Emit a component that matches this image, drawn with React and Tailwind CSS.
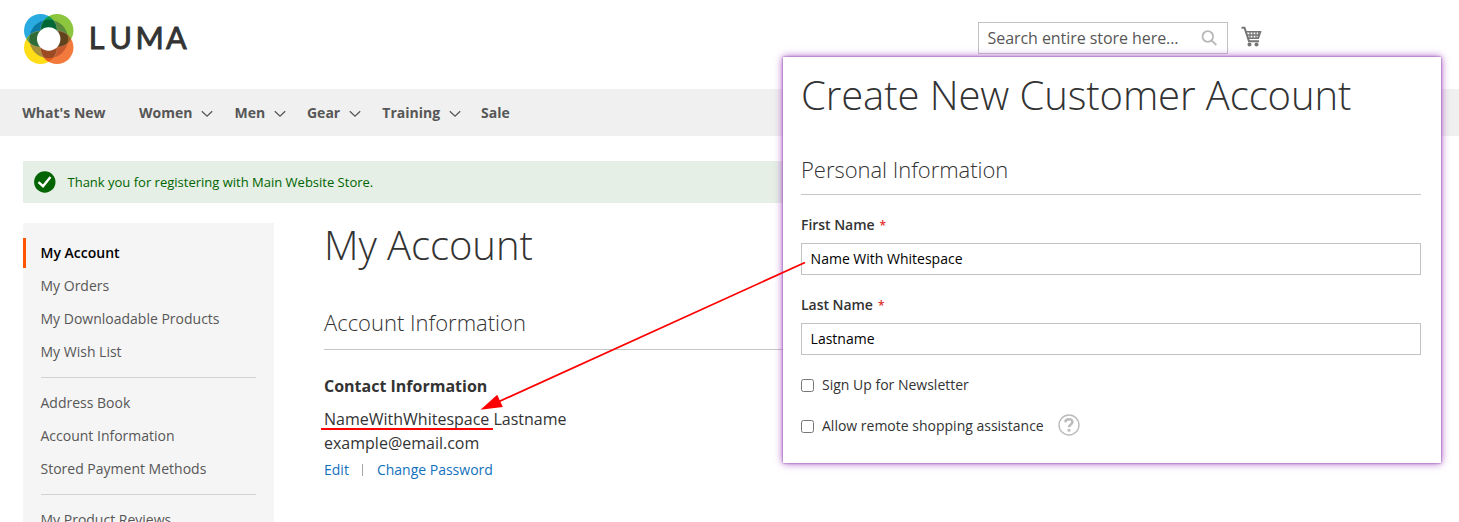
function Chevron() {
  return (
    <svg className="ml-[8.5px] mt-[2px] h-[8px] w-[12px]" viewBox="0 0 12 8" fill="none" stroke="#575757" strokeWidth="1.3">
      <path d="M0.8 1.2 L6 6.2 L11.2 1.2" />
    </svg>
  );
}

function Logo() {
  return (
    <svg className="h-[60px] w-[180px]" viewBox="20 10 180 60">
      <defs>
        <clipPath id="blue"><circle cx="40.5" cy="30.5" r="16.5" /></clipPath>
        <clipPath id="orange"><circle cx="57" cy="47.5" r="16.5" /></clipPath>
        <clipPath id="core"><circle cx="48.7" cy="39" r="19.3" /></clipPath>
      </defs>
      <circle cx="40.5" cy="30.5" r="16.5" fill="#29abe2" />
      <circle cx="57" cy="30.5" r="16.5" fill="#8cc63f" />
      <circle cx="40.5" cy="47.5" r="16.5" fill="#ffde17" />
      <circle cx="57" cy="47.5" r="16.5" fill="#f37a3d" />
      <g clipPath="url(#blue)"><circle cx="57" cy="30.5" r="16.5" fill="#069a50" /></g>
      <g clipPath="url(#blue)"><circle cx="40.5" cy="47.5" r="16.5" fill="#5fa046" /></g>
      <g clipPath="url(#orange)"><circle cx="57" cy="30.5" r="16.5" fill="#9a6a2a" /></g>
      <g clipPath="url(#orange)"><circle cx="40.5" cy="47.5" r="16.5" fill="#e8601c" /></g>
      <g clipPath="url(#core)">
        <circle cx="40.5" cy="30.5" r="16.5" fill="#0b7ba5" />
        <circle cx="57" cy="30.5" r="16.5" fill="#5b8a3d" />
        <circle cx="40.5" cy="47.5" r="16.5" fill="#a89038" />
        <circle cx="57" cy="47.5" r="16.5" fill="#c65a2d" />
        <g clipPath="url(#blue)"><circle cx="57" cy="30.5" r="16.5" fill="#006837" /></g>
        <g clipPath="url(#blue)"><circle cx="40.5" cy="47.5" r="16.5" fill="#2f6b37" /></g>
        <g clipPath="url(#orange)"><circle cx="57" cy="30.5" r="16.5" fill="#60421c" /></g>
        <g clipPath="url(#orange)"><circle cx="40.5" cy="47.5" r="16.5" fill="#9c4a24" /></g>
        <g fill="none" stroke="#fff" strokeOpacity="0.3" strokeWidth="0.5">
          <circle cx="40.5" cy="30.5" r="16.5" />
          <circle cx="57" cy="30.5" r="16.5" />
          <circle cx="40.5" cy="47.5" r="16.5" />
          <circle cx="57" cy="47.5" r="16.5" />
        </g>
      </g>
      <circle cx="48.7" cy="39" r="11.7" fill="#fff" />
      <text x="88.7 109.5 135.5 166" y="49.3" className="font-['Lato',sans-serif] text-[30.5px] font-normal" fill="#333" stroke="#333" strokeWidth="0.9">LUMA</text>
    </svg>
  );
}

function Cart() {
  return (
    <svg className="ml-[13px] h-[22px] w-[22px]" viewBox="0 0 22 22" fill="none" stroke="#757575">
      <path d="M0.5 1.8 H3.5 L8 15.3 H18" strokeWidth="2" />
      <path d="M5 5.8 H19.5 L17.3 12.3 H7" strokeWidth="1.6" />
      <path d="M6 9 H19 M9 5.5 V12 M12 5.5 V12 M15 5.5 V12 M18 5.5 L17 12" strokeWidth="1.3" />
      <circle cx="8.5" cy="18.5" r="2" fill="#757575" stroke="none" />
      <circle cx="15.5" cy="18.5" r="2" fill="#757575" stroke="none" />
    </svg>
  );
}

const nav = [
  ["What's New", false, "w-[116.7px]"],
  ["Women", true, "w-[95.5px]"],
  ["Men", true, "w-[72.5px]"],
  ["Gear", true, "w-[75.3px]"],
  ["Training", true, "w-[98.8px]"],
  ["Sale", false, "w-[60px]"],
];

function SideItem({ children }) {
  return <li className="h-[33px] pl-[17.5px] leading-[33px]">{children}</li>;
}

function Field({ label, value }) {
  return (
    <div className="mb-5">
      <div className="h-[28px] font-semibold leading-5 tracking-[-0.04px]">
        {label}<span className="ml-[5px] text-[12px] text-[#e02b27]">*</span>
      </div>
      <div className="h-8 border border-[#c2c2c2] px-[8.6px] leading-[30px] text-black">{value}</div>
    </div>
  );
}

function Dialog() {
  return (
    <section className="absolute left-[783px] top-[57px] h-[406px] w-[658px] bg-white pl-[18px] pr-5 shadow-[0_0_2px_#8e44ad,0_0_8px_#a24bc0]">
      <h1 className="h-[102px] pt-[16px] text-[40px] font-light leading-[44px] tracking-[-0.09px]">Create New Customer Account</h1>
      <h2 className="mb-[20px] h-[36px] border-b border-[#c6c6c6] text-[22px] font-light leading-[20px] tracking-[-0.03px]">Personal Information</h2>
      <Field label="First Name" value="Name With Whitespace" />
      <Field label="Last Name" value="Lastname" />
      <label className="flex h-5 items-start"><input type="checkbox" className="mr-2 mt-[4px] h-[13px] w-[13px]" /><span className="leading-5">Sign Up for Newsletter</span></label>
      <div className="mt-[20px] flex h-[22px] items-start">
        <label className="flex items-start"><input type="checkbox" className="mr-2 mt-[5px] h-[13px] w-[13px]" /><span className="mt-px leading-5">Allow remote shopping assistance</span></label>
        <svg className="-mt-px ml-[14.5px] h-[22px] w-[22px]" viewBox="0 0 22 22" fill="none" stroke="#bbb">
          <circle cx="11" cy="11" r="10" strokeWidth="1.4" />
          <path d="M7.3 8.3 C7.5 4.1 14.5 4.2 14.4 8 C14.4 10.6 11 10.3 11 13.3" strokeWidth="2.5" />
          <path d="M11 15 V17.6" strokeWidth="2.8" />
        </svg>
      </div>
    </section>
  );
}

export default function App() {
  return (
    <div className="relative h-[522px] w-[1459px] overflow-hidden bg-white font-['Open_Sans',sans-serif] text-[14px] text-[#333]">
      <header className="flex h-[89px] items-start pl-[20px] pt-[10px]">
        <Logo />
        <div className="ml-[778px] mt-[12px] flex h-8 w-[250px] items-center border border-[#c2c2c2] pl-[8.5px] pr-[10px] text-[16px] tracking-[-0.06px] text-[#575757]">
          <span className="grow">Search entire store here...</span>
          <svg className="h-4 w-4" viewBox="0 0 16 16" fill="none" stroke="#b8b8b8" strokeWidth="1.8"><circle cx="6.8" cy="6.5" r="5.3" /><path d="M10.5 10.3 L15.3 15" /></svg>
        </div>
        <div className="mt-[16px]"><Cart /></div>
      </header>
      <nav className="flex h-[47px] items-center bg-[#f0f0f0] pl-[22.3px] font-bold text-[#575757]">
        {nav.map(([name, arrow, width]) => (
          <div key={name} className={"flex shrink-0 items-center " + width}>{name}{arrow && <Chevron />}</div>
        ))}
      </nav>
      <div className="ml-[23px] mt-[25px] flex h-[42px] w-[1413px] items-center bg-[#e5efe5] pl-[11px] text-[13px] text-[#006400]">
        <svg className="mr-[11.5px] h-[22px] w-[22px]" viewBox="0 0 22 22"><circle cx="10.8" cy="11" r="10.7" fill="#006400" /><path d="M4.5 11.2 L9 15.2 L16.5 6" fill="none" stroke="#fff" strokeWidth="2.4" /></svg>
        <span className="pt-[2px]">Thank you for registering with Main Website Store.</span>
      </div>
      <div className="flex pl-[23px] pt-5">
        <ul className="h-[320px] w-[251px] bg-[#f5f5f5] pt-[15px] text-[#575757]">
          <li className="mb-[1px] h-[30px] border-l-[3px] border-[#ff5501] pl-[14.5px] font-semibold leading-[30px] text-black">My Account</li>
          <SideItem>My Orders</SideItem>
          <SideItem>My Downloadable Products</SideItem>
          <SideItem>My Wish List</SideItem>
          <li className="mx-[18px] mb-[8px] mt-[9px] h-px bg-[#d1d1d1]" />
          <SideItem>Address Book</SideItem>
          <SideItem>Account Information</SideItem>
          <SideItem>Stored Payment Methods</SideItem>
          <li className="mx-[18px] mb-[8px] mt-[9px] h-px bg-[#d1d1d1]" />
          <SideItem>My Product Reviews</SideItem>
        </ul>
        <main className="ml-[50px] w-[1112px]">
          <h1 className="h-[87px] text-[40px] font-light leading-[44px] tracking-[-0.06px]">My Account</h1>
          <h2 className="h-[40px] border-b border-[#c6c6c6] text-[22px] font-light leading-[24px]">Account Information</h2>
          <h3 className="mt-[24px] text-[16px] font-bold leading-[24px]">Contact Information</h3>
          <p className="mt-[9px] text-[16px] leading-[24px]">NameWithWhitespace Lastname<br />example@email.com</p>
          <div className="mt-[5px] flex items-center leading-5 text-[#1271bd]">
            Edit<span className="ml-[13px] mr-[14px] h-[12px] w-px bg-[#a6a6a6]" />Change Password
          </div>
        </main>
      </div>
      <Dialog />
      <svg className="absolute left-[320px] top-[255px] h-[180px] w-[490px]" viewBox="320 255 490 180">
        <path d="M805 262.5 L498 402" stroke="#f00" strokeWidth="1.8" />
        <path d="M480.5 409.8 L497.2 394.8 L502.8 407 Z" fill="#f00" />
        <path d="M321 429 H493" stroke="#f00" strokeWidth="2" />
      </svg>
    </div>
  );
}
